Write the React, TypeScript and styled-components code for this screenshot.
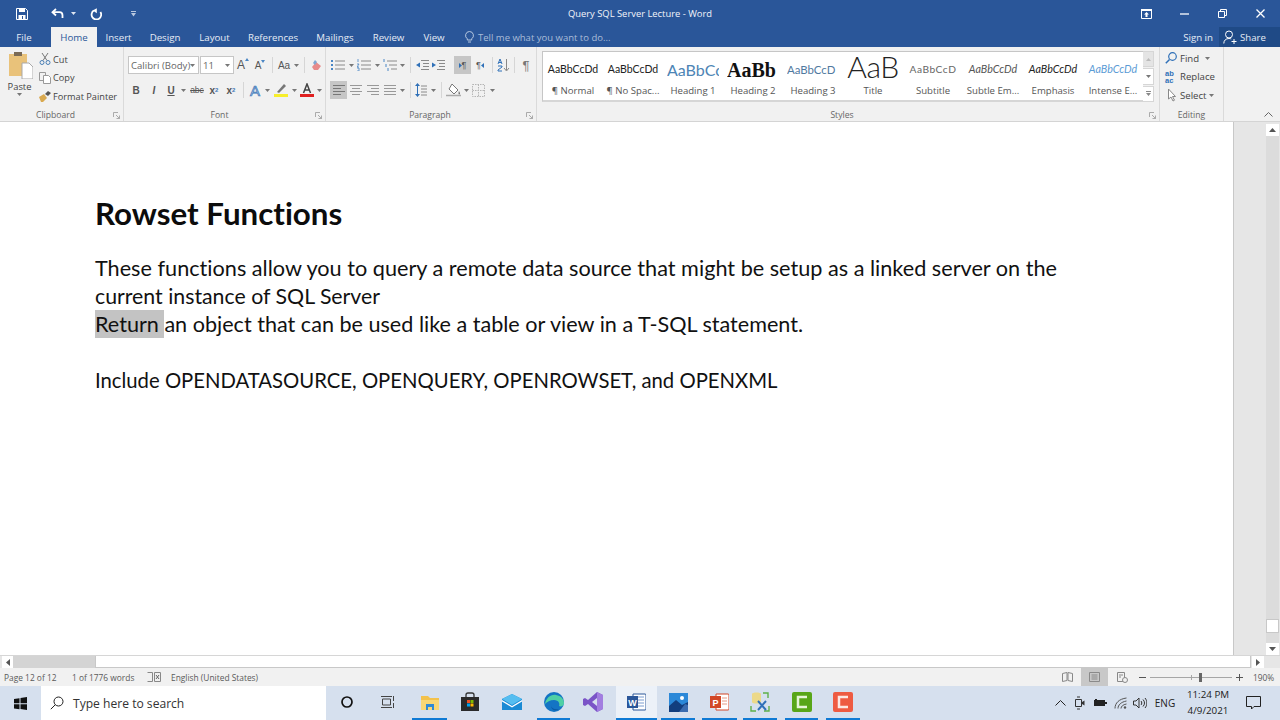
import React from 'react';
import styled, { createGlobalStyle } from 'styled-components';

const GlobalStyle = createGlobalStyle`
  html, body {
    margin: 0;
    padding: 0;
    width: 1280px;
    height: 720px;
    overflow: hidden;
    background: #fff;
    font-family: 'Open Sans', 'Noto Sans', sans-serif;
  }
`;

const Window = styled.div`
  width: 1280px;
  height: 720px;
  display: flex;
  flex-direction: column;
  color: #444;
`;

const TitleBar = styled.div`
  height: 27px;
  background: #2a5699;
  display: grid;
  grid-template-columns: 1fr auto 1fr;
  align-items: center;
  color: #fff;
`;

const TitleText = styled.div`
  font-size: 9.4px;
  color: #f1f4f9;
  white-space: nowrap;
`;

const Row = styled.div<{ $justify?: string }>`
  display: flex;
  align-items: center;
  justify-content: ${p => p.$justify || 'flex-start'};
`;

const WinRow = styled(Row)`
  padding-right: 1px;
`;

const Slot = styled.div<{ $w: number; $h?: number; $active?: boolean }>`
  width: ${p => p.$w}px;
  height: ${p => p.$h || 18}px;
  flex: none;
  display: flex;
  align-items: center;
  justify-content: center;
  background: ${p => (p.$active ? '#c6c6c6' : 'transparent')};
  font-size: 10px;
  color: #555;
  font-family: 'Liberation Sans', sans-serif;
`;

const Divider = styled(Slot)`
  &::after {
    content: '';
    width: 1px;
    height: 16px;
    background: #d6d6d6;
  }
`;

const TabBar = styled.div`
  height: 20px;
  background: #2a5699;
  display: flex;
  align-items: stretch;
`;

const Tab = styled.div<{ $w: number; $active?: boolean; $ml?: number }>`
  width: ${p => p.$w}px;
  margin-left: ${p => p.$ml || 0}px;
  flex: none;
  display: flex;
  align-items: center;
  justify-content: center;
  font-size: 9.7px;
  white-space: nowrap;
  background: ${p => (p.$active ? '#f1f1f1' : 'transparent')};
  color: ${p => (p.$active ? '#2a5699' : '#e6ecf5')};
`;

const TellMe = styled.div`
  display: flex;
  align-items: center;
  gap: 4px;
  margin-left: 11px;
  font-size: 9.5px;
  color: #a9bcd8;
  white-space: nowrap;
`;

const TabRight = styled.div`
  margin-left: auto;
  display: flex;
  align-items: stretch;
`;

const SignIn = styled.div`
  display: flex;
  align-items: center;
  font-size: 9.7px;
  color: #e6ecf5;
  margin-right: 6px;
`;

const Share = styled.div`
  width: 61px;
  background: #1f4a86;
  color: #e6ecf5;
  font-size: 9.6px;
  display: flex;
  align-items: center;
  gap: 3px;
  padding-left: 4px;
  box-sizing: border-box;
`;

const Ribbon = styled.div`
  height: 75px;
  flex: none;
  background: #f1f1f1;
  border-bottom: 1px solid #d4d4d4;
  box-sizing: border-box;
  display: flex;
  position: relative;
`;

const Group = styled.section<{ $w: number; $noBorder?: boolean }>`
  width: ${p => p.$w}px;
  flex: none;
  box-sizing: border-box;
  display: flex;
  flex-direction: column;
  position: relative;
  border-right: ${p => (p.$noBorder ? 'none' : '1px solid #dadada')};
`;

const GroupBody = styled.div<{ $pl?: number; $pt?: number }>`
  flex: 1;
  min-height: 0;
  padding-left: ${p => p.$pl || 0}px;
  padding-top: ${p => p.$pt || 0}px;
`;

const GroupLabel = styled.div<{ $pr?: number }>`
  height: 13px;
  font-size: 8.6px;
  line-height: 15px;
  text-align: center;
  color: #666;
  padding-right: ${p => p.$pr || 0}px;
`;

const Launcher = styled.div`
  position: absolute;
  right: 3px;
  bottom: 2px;
  line-height: 0;
`;

const Collapse = styled.div`
  position: absolute;
  right: 7px;
  bottom: 4px;
  line-height: 0;
`;

const ClipRow = styled.div`
  display: flex;
`;

const PasteCol = styled.div`
  width: 38px;
  padding-left: 1px;
  box-sizing: border-box;
  display: flex;
  flex-direction: column;
  align-items: center;
  padding-top: 4px;
  font-size: 9.4px;
  color: #444;
`;

const PasteIcon = styled.div`
  margin-left: 3px;
`;

const PasteText = styled.div`
  margin-top: 1px;
  line-height: 13px;
`;

const ClipList = styled.div`
  display: flex;
  flex-direction: column;
  padding-top: 3px;
`;

const ClipItem = styled.div`
  height: 18.5px;
  display: flex;
  align-items: center;
  gap: 1px;
  font-size: 9.2px;
  white-space: nowrap;
  color: #444;
`;

const ToolRows = styled.div`
  display: flex;
  flex-direction: column;
  gap: 7px;
  padding-top: 9px;
`;

const FontBox = styled.div<{ $w: number; $ml?: number }>`
  width: ${p => p.$w}px;
  margin-left: ${p => p.$ml || 0}px;
  height: 18px;
  flex: none;
  box-sizing: border-box;
  background: #fff;
  border: 1px solid #c6c6c6;
  display: flex;
  align-items: center;
  justify-content: space-between;
  padding: 0 3px 0 2px;
  font-size: 9.6px;
  color: #666;
  white-space: nowrap;
  overflow: hidden;
`;

const SizeCaret = styled.span`
  display: flex;
  align-items: flex-start;
`;

const Gallery = styled.div`
  margin: 4px 0 0 5px;
  width: 612px;
  height: 51px;
  display: flex;
`;

const GalleryItems = styled.div`
  width: 601px;
  box-sizing: border-box;
  background: #fff;
  border: 1px solid #c6c6c6;
  border-right: none;
  border-bottom: 2px solid #d6d6d6;
  display: flex;
`;

const StyleItem = styled.div`
  width: 60px;
  flex: none;
  display: flex;
  flex-direction: column;
  align-items: center;
  overflow: hidden;
`;

const StylePreview = styled.div<{ $font: string; $size: number; $color: string; $bold?: boolean; $italic?: boolean; $spacing?: number; $light?: boolean; $raise?: number }>`
  height: 29px;
  width: 52px;
  overflow: hidden;
  white-space: nowrap;
  display: flex;
  align-items: center;
  justify-content: ${p => (p.$spacing === undefined ? 'flex-start' : 'center')};
  font-family: ${p => p.$font};
  font-size: ${p => p.$size}px;
  line-height: 1;
  color: ${p => p.$color};
  font-weight: ${p => (p.$bold ? 700 : p.$light ? 300 : 400)};
  font-style: ${p => (p.$italic ? 'italic' : 'normal')};
  letter-spacing: ${p => p.$spacing || 0}px;
  margin-top: 3px;
  padding-bottom: ${p => p.$raise || 0}px;
  box-sizing: border-box;
`;

const StyleName = styled.div`
  font-size: 9.6px;
  color: #555;
  white-space: nowrap;
  line-height: 14px;
`;

const GalleryScroll = styled.div`
  width: 11px;
  display: flex;
  flex-direction: column;
  gap: 1px;
  background: #f1f1f1;
`;

const ScrollCell = styled.div<{ $disabled?: boolean }>`
  flex: 1;
  background: ${p => (p.$disabled ? '#e4e4e4' : '#fff')};
  border: 1px solid #d6d6d6;
  border-left: none;
  display: flex;
  align-items: center;
  justify-content: center;
`;

const EditList = styled.div`
  display: flex;
  flex-direction: column;
  padding: 2px 0 0 5px;
`;

const EditItem = styled.div`
  height: 18.5px;
  display: flex;
  align-items: center;
  gap: 3px;
  font-size: 9.6px;
  color: #444;
  white-space: nowrap;
`;

const ReplaceIcon = styled.div`
  width: 12px;
  display: flex;
  flex-direction: column;
  font-family: 'Liberation Sans', sans-serif;
  font-size: 7.5px;
  line-height: 7px;
  font-weight: 700;
  color: #2f70b8;
`;

const Main = styled.div`
  flex: 1;
  min-height: 0;
  display: flex;
`;

const Page = styled.main`
  width: 1234px;
  flex: none;
  box-sizing: border-box;
  background: #fff;
  padding: 70px 0 0 95px;
  border-right: 1px solid #c8c8c8;
  font-family: Lato, 'Open Sans', sans-serif;
  font-variant-ligatures: none;
  color: #111;
`;

const Heading = styled.h1`
  margin: 0 0 20px;
  height: 42px;
  line-height: 42px;
  font-size: 31.3px;
  font-weight: 700;
  white-space: nowrap;
  color: #0c0c0c;
`;

const Line = styled.p<{ $size?: number }>`
  margin: 0;
  height: 28px;
  line-height: 28px;
  font-size: ${p => p.$size || 21.67}px;
  white-space: nowrap;
`;

const Highlight = styled.span`
  display: inline-block;
  height: 28px;
  background: #c3c3c3;
  white-space: pre;
`;

const Gutter = styled.aside`
  flex: 1;
  background: #e6e6e6;
  display: flex;
  justify-content: flex-end;
  padding-right: 1px;
`;

const VScroll = styled.div`
  width: 13px;
  background: #dcdcdc;
  display: flex;
  flex-direction: column;
  margin-top: 2px;
`;

const ArrowBox = styled.div<{ $w?: number; $h?: number }>`
  width: ${p => p.$w || 13}px;
  height: ${p => p.$h || 12}px;
  flex: none;
  background: #fff;
  display: flex;
  align-items: center;
  justify-content: center;
`;

const VTrack = styled.div`
  flex: 1;
`;

const VThumb = styled.div`
  height: 14px;
  flex: none;
  background: #fff;
  border: 1px solid #c8c8c8;
  box-sizing: border-box;
  margin-bottom: 10px;
`;

const HScroll = styled.div`
  height: 13px;
  flex: none;
  background: #e6e6e6;
  display: flex;
  align-items: stretch;
  padding-left: 2px;
  border-top: 1px solid #d6d6d6;
  box-sizing: border-box;
`;

const HTrack = styled.div`
  width: 82px;
  background: #d4d4d4;
`;

const HThumb = styled.div`
  width: 1156px;
  background: #fff;
  border: 1px solid #c8c8c8;
  border-top: none;
  box-sizing: border-box;
  margin-right: 1px;
`;

const StatusBar = styled.div`
  height: 18px;
  flex: none;
  background: #f1f1f1;
  display: flex;
  align-items: center;
  font-size: 8.4px;
  color: #5a5a5a;
  white-space: nowrap;
`;

const StatusText = styled.span<{ $w?: number; $ml?: number }>`
  margin-left: ${p => p.$ml || 0}px;
  width: ${p => (p.$w ? `${p.$w}px` : 'auto')};
  flex: none;
`;

const StatusRight = styled.div`
  margin-left: auto;
  display: flex;
  align-items: center;
  height: 100%;
`;

const ViewBtn = styled.div<{ $w: number; $active?: boolean }>`
  width: ${p => p.$w}px;
  height: 100%;
  display: flex;
  align-items: center;
  justify-content: center;
  background: ${p => (p.$active ? '#c8c8c8' : 'transparent')};
`;

const ZoomSlider = styled.div`
  width: 82px;
  height: 1px;
  margin: 0 2px;
  background: #a6a6a6;
  position: relative;
`;

const ZoomThumb = styled.div`
  position: absolute;
  left: 49px;
  top: -4px;
  width: 3px;
  height: 9px;
  background: #666;
`;

const ZoomTick = styled.div`
  position: absolute;
  left: 41px;
  top: -2px;
  width: 1px;
  height: 5px;
  background: #a6a6a6;
`;

const Taskbar = styled.div`
  height: 34px;
  flex: none;
  background: #d6e0ee;
  display: flex;
  align-items: stretch;
`;

const StartBtn = styled.div`
  width: 41px;
  display: flex;
  align-items: center;
  justify-content: center;
`;

const SearchBox = styled.div`
  width: 285px;
  background: #fff;
  display: flex;
  align-items: center;
  gap: 9px;
  padding-left: 9px;
  box-sizing: border-box;
  font-size: 12.1px;
  color: #333;
`;

const TaskIcon = styled.div<{ $w: number; $ml?: number; $active?: boolean; $open?: boolean }>`
  width: ${p => p.$w}px;
  margin-left: ${p => p.$ml || 0}px;
  flex: none;
  display: flex;
  align-items: center;
  justify-content: center;
  box-sizing: border-box;
  background: ${p => (p.$active ? '#ecf1f8' : 'transparent')};
  border-bottom: 2px solid ${p => (p.$open ? '#0f7ad4' : 'transparent')};
`;

const Tray = styled.div`
  margin-left: auto;
  display: flex;
  align-items: center;
`;

const TrayText = styled.div`
  width: 30px;
  text-align: center;
  font-size: 10px;
  color: #222;
`;

const Clock = styled.div`
  width: 56px;
  text-align: center;
  font-size: 9.8px;
  line-height: 16px;
  color: #222;
`;

const Svg: React.FC<{ w: number; h: number; children: React.ReactNode }> = ({ w, h, children }) => (
  <svg width={w} height={h} viewBox={`0 0 ${w} ${h}`} fill="none" style={{ display: 'block', flex: 'none' }}>
    {children}
  </svg>
);

const Chev: React.FC<{ c?: string }> = ({ c = '#777' }) => (
  <Svg w={5} h={3}><path d="M0 0h5L2.5 3z" fill={c} /></Svg>
);

const Lines: React.FC<{ kind: 'bullet' | 'number' | 'multi' }> = ({ kind }) => (
  <Svg w={14} h={12}>
    {kind === 'bullet' && <path d="M0 1h2v2H0zM0 5h2v2H0zM0 9h2v2H0z" fill="#4a86c4" />}
    {kind === 'number' && <path d="M1 0v3M0 5h2L0 8h2M0 9h2v3H0" stroke="#4a86c4" strokeWidth=".8" />}
    {kind === 'multi' && <path d="M1 0v3M3 5v3M5 9v3" stroke="#4a86c4" />}
    <path d={kind === 'multi' ? 'M4 2h10M6 6h8M8 10h6' : 'M4 2h10M4 6h10M4 10h10'} stroke="#8a8a8a" />
  </Svg>
);

const Align: React.FC<{ kind: 'left' | 'center' | 'right' | 'justify' }> = ({ kind }) => {
  const paths = {
    left: 'M1 1.5h12M1 4.5h8M1 7.5h12M1 10.5h8',
    center: 'M1 1.5h12M3 4.5h8M1 7.5h12M3 10.5h8',
    right: 'M1 1.5h12M5 4.5h8M1 7.5h12M5 10.5h8',
    justify: 'M1 1.5h12M1 4.5h12M1 7.5h12M1 10.5h12',
  };
  return <Svg w={14} h={12}><path d={paths[kind]} stroke={kind === 'left' ? '#777' : '#999'} /></Svg>;
};

const Launch = () => (
  <Svg w={7} h={7}><path d="M.5 5V.5H5M3 3l3.5 3.5M6.5 3.5v3h-3" stroke="#999" strokeWidth=".8" /></Svg>
);

const Caret: React.FC<{ down?: boolean }> = ({ down }) => (
  <Svg w={4} h={3}><path d={down ? 'M0 0h4L2 3z' : 'M2 0l2 3H0z'} fill="#4a86c4" /></Svg>
);

const styleItems = [
  { sample: 'AaBbCcDd', name: '¶ Normal', font: 'Lato, sans-serif', size: 10.5, color: '#222', spacing: 0 },
  { sample: 'AaBbCcDd', name: '¶ No Spac...', font: 'Lato, sans-serif', size: 10.5, color: '#222', spacing: 0 },
  { sample: 'AaBbCc', name: 'Heading 1', font: 'Lato, sans-serif', size: 16, color: '#4d85b5' },
  { sample: 'AaBb', name: 'Heading 2', font: "'Liberation Serif', serif", size: 20, color: '#111', bold: true },
  { sample: 'AaBbCcD', name: 'Heading 3', font: 'Lato, sans-serif', size: 11.4, color: '#50799f' },
  { sample: 'AaB', name: 'Title', font: 'Lato, sans-serif', size: 30, color: '#222', spacing: -0.4, light: true, raise: 7 },
  { sample: 'AaBbCcD', name: 'Subtitle', font: 'Lato, sans-serif', size: 10.2, color: '#666', spacing: 0.5 },
  { sample: 'AaBbCcDd', name: 'Subtle Em...', font: 'Lato, sans-serif', size: 10.7, color: '#555', italic: true, spacing: 0 },
  { sample: 'AaBbCcDd', name: 'Emphasis', font: 'Lato, sans-serif', size: 10.7, color: '#222', italic: true, spacing: 0 },
  { sample: 'AaBbCcDd', name: 'Intense E...', font: 'Lato, sans-serif', size: 10.7, color: '#5b9bd5', italic: true, spacing: 0 },
];

const App: React.FC = () => {
  return (
    <>
      <GlobalStyle />
      <Window>
        <TitleBar>
          <Row>
            <Slot $w={44}>
              <Svg w={12} h={12}>
                <path d="M.5.5h9l2 2v9H.5z" stroke="#fff" />
                <path d="M3 1v3h6V1z" fill="#fff" />
                <path d="M2.5 7h7v4.5h-7z" fill="#fff" />
                <path d="M6.5 8v3" stroke="#2a5699" />
              </Svg>
            </Slot>
            <Slot $w={26}>
              <Svg w={13} h={11}>
                <path d="M5 1L1.5 4.2 5 7.5" stroke="#fff" strokeWidth="1.8" />
                <path d="M2 4.2h6.5a3 3 0 013 3V10" stroke="#fff" strokeWidth="1.8" />
              </Svg>
            </Slot>
            <Slot $w={6}><Chev c="#dfe7f2" /></Slot>
            <Slot $w={9} />
            <Slot $w={22}>
              <Svg w={12} h={12}>
                <path d="M3.8 2.6a4.8 4.8 0 106.6 1.4" stroke="#fff" strokeWidth="1.8" />
                <path d="M6.8.2v5L2.8 2.6z" fill="#fff" />
              </Svg>
            </Slot>
            <Slot $w={22} />
            <Slot $w={8}>
              <Svg w={5} h={6}><path d="M0 0h5v1H0zM0 2h5L2.5 5.5z" fill="#b9c8df" /></Svg>
            </Slot>
          </Row>
          <TitleText>Query SQL Server Lecture - Word</TitleText>
          <WinRow $justify="flex-end">
            <Slot $w={38}>
              <Svg w={11} h={10}>
                <path d="M.5.5h10v9H.5z" stroke="#fff" />
                <path d="M0 0h11v2H0zM5.5 3L8 5.5H6.5V8h-2V5.5H3z" fill="#fff" />
              </Svg>
            </Slot>
            <Slot $w={38}><Svg w={9} h={2}><path d="M0 1h9" stroke="#fff" strokeWidth="1.3" /></Svg></Slot>
            <Slot $w={38}>
              <Svg w={9} h={9}><path d="M.5 2.5h6v6h-6zM2.5 2.5v-2h6v6h-2" stroke="#fff" /></Svg>
            </Slot>
            <Slot $w={38}><Svg w={9} h={9}><path d="M.5.5l8 8M8.5.5l-8 8" stroke="#fff" strokeWidth="1.3" /></Svg></Slot>
          </WinRow>
        </TitleBar>

        <TabBar>
          <Tab $w={48}>File</Tab>
          <Tab $w={46} $ml={3} $active>Home</Tab>
          <Tab $w={43}>Insert</Tab>
          <Tab $w={50}>Design</Tab>
          <Tab $w={49}>Layout</Tab>
          <Tab $w={68}>References</Tab>
          <Tab $w={56}>Mailings</Tab>
          <Tab $w={51}>Review</Tab>
          <Tab $w={40}>View</Tab>
          <TellMe>
            <Svg w={9} h={12}>
              <path d="M4.5.5a4 4 0 012.2 7.3V9H2.3V7.8A4 4 0 014.5.5zM3 11h3" stroke="#b7c8e0" />
            </Svg>
            Tell me what you want to do...
          </TellMe>
          <TabRight>
            <SignIn>Sign in</SignIn>
            <Share>
              <Svg w={14} h={14}>
                <circle cx="6" cy="4.5" r="3.5" stroke="#fff" />
                <path d="M.8 13.5c0-3 2-5 5.2-5 1 0 1.6.2 2.2.5M8.5 11.5h5M11 9v5" stroke="#fff" />
              </Svg>
              Share
            </Share>
          </TabRight>
        </TabBar>

        <Ribbon>
          <Group $w={124}>
            <GroupBody>
              <ClipRow>
                <PasteCol>
                  <PasteIcon>
                    <Svg w={24} h={28}>
                      <path d="M0 3h18v22H0z" fill="#e9c27a" />
                      <path d="M5 1h8v4H5z" fill="#7a6a55" />
                      <path d="M13 12h7l4 4v12H13z" fill="#fff" stroke="#a9a9a9" />
                    </Svg>
                  </PasteIcon>
                  <PasteText>Paste</PasteText>
                  <Chev />
                </PasteCol>
                <ClipList>
                  <ClipItem>
                    <Slot $w={14}>
                      <Svg w={12} h={12}>
                        <path d="M3 0l5 7.5M9 0L4 7.5" stroke="#777" />
                        <circle cx="3" cy="9.5" r="2" stroke="#4a7fb5" />
                        <circle cx="9" cy="9.5" r="2" stroke="#4a7fb5" />
                      </Svg>
                    </Slot>
                    Cut
                  </ClipItem>
                  <ClipItem>
                    <Slot $w={14}>
                      <Svg w={12} h={12}>
                        <path d="M.5.5h6v8h-6z" fill="#f1f1f1" stroke="#999" />
                        <path d="M4.5 3.5h5l2 2v6h-7z" fill="#fff" stroke="#999" />
                      </Svg>
                    </Slot>
                    Copy
                  </ClipItem>
                  <ClipItem>
                    <Slot $w={14}>
                      <Svg w={12} h={11}>
                        <path d="M0 6l5-3 3 4-4 4H2z" fill="#d9a94f" />
                        <path d="M6 3l3-3 3 2-3 3z" fill="#555" />
                      </Svg>
                    </Slot>
                    Format Painter
                  </ClipItem>
                </ClipList>
              </ClipRow>
            </GroupBody>
            <GroupLabel $pr={12}>Clipboard</GroupLabel>
            <Launcher><Launch /></Launcher>
          </Group>

          <Group $w={202}>
            <GroupBody $pl={4}>
              <ToolRows>
                <Row>
                  <FontBox $w={71}>Calibri (Body)<Chev /></FontBox>
                  <FontBox $w={34} $ml={1}>11<Chev /></FontBox>
                  <Slot $w={18} style={{ fontSize: 12 }}><SizeCaret>A<Caret /></SizeCaret></Slot>
                  <Slot $w={16} style={{ fontSize: 10 }}><SizeCaret>A<Caret down /></SizeCaret></Slot>
                  <Divider $w={8} />
                  <Slot $w={16}>Aa</Slot>
                  <Slot $w={8}><Chev /></Slot>
                  <Divider $w={8} />
                  <Slot $w={16}>
                    <Svg w={11} h={12}>
                      <path d="M1 8l4-5 5 4-3 4H3z" fill="#e78b8b" />
                      <path d="M4 1l2 2-2 3-2-2z" fill="#7fa8d4" />
                    </Svg>
                  </Slot>
                </Row>
                <Row>
                  <Slot $w={16} style={{ fontWeight: 700 }}>B</Slot>
                  <Slot $w={20} style={{ fontWeight: 700, fontStyle: 'italic' }}>I</Slot>
                  <Slot $w={14} style={{ fontWeight: 700, textDecoration: 'underline' }}>U</Slot>
                  <Slot $w={10}><Chev /></Slot>
                  <Slot $w={18} style={{ fontSize: 8.5, textDecoration: 'line-through' }}>abc</Slot>
                  <Slot $w={16} style={{ fontWeight: 700 }}>x<sub style={{ fontSize: 6, color: '#3f78b8' }}>2</sub></Slot>
                  <Slot $w={18} style={{ fontWeight: 700 }}>x<sup style={{ fontSize: 6, color: '#3f78b8' }}>2</sup></Slot>
                  <Divider $w={6} />
                  <Slot $w={18} style={{ fontSize: 15, color: '#bcd4ee', WebkitTextStroke: '0.7px #3f78b8' }}>A</Slot>
                  <Slot $w={7}><Chev /></Slot>
                  <Slot $w={20}>
                    <Svg w={14} h={14}>
                      <path d="M3 9l7-8 2 2-7 7z" fill="#777" />
                      <path d="M0 11h14v3H0z" fill="#f7ee2b" />
                    </Svg>
                  </Slot>
                  <Slot $w={6}><Chev /></Slot>
                  <Slot $w={20}>
                    <Svg w={14} h={14}>
                      <path d="M3.5 10L7 1l3.5 9M5 7h4" stroke="#444" strokeWidth="1.5" />
                      <path d="M0 11h14v3H0z" fill="#e02020" />
                    </Svg>
                  </Slot>
                  <Slot $w={5}><Chev /></Slot>
                </Row>
              </ToolRows>
            </GroupBody>
            <GroupLabel $pr={10}>Font</GroupLabel>
            <Launcher><Launch /></Launcher>
          </Group>

          <Group $w={211}>
            <GroupBody $pl={4}>
              <ToolRows>
                <Row>
                  <Slot $w={16}><Lines kind="bullet" /></Slot>
                  <Slot $w={10}><Chev /></Slot>
                  <Slot $w={16}><Lines kind="number" /></Slot>
                  <Slot $w={10}><Chev /></Slot>
                  <Slot $w={16}><Lines kind="multi" /></Slot>
                  <Slot $w={8}><Chev /></Slot>
                  <Divider $w={8} />
                  <Slot $w={16}>
                    <Svg w={14} h={12}>
                      <path d="M6 1.5h8M8 4.5h6M8 7.5h6M6 10.5h8" stroke="#8a8a8a" />
                      <path d="M5 3.5v5L1 6z" fill="#2f70b8" />
                    </Svg>
                  </Slot>
                  <Slot $w={16}>
                    <Svg w={14} h={12}>
                      <path d="M6 1.5h8M8 4.5h6M8 7.5h6M6 10.5h8" stroke="#8a8a8a" />
                      <path d="M1 3.5v5L5 6z" fill="#2f70b8" />
                    </Svg>
                  </Slot>
                  <Slot $w={8} />
                  <Slot $w={17} $active style={{ fontSize: 9 }}>
                    <Svg w={3} h={5}><path d="M0 0l3 2.5L0 5z" fill="#2f70b8" /></Svg>¶
                  </Slot>
                  <Slot $w={18} style={{ fontSize: 9 }}>
                    ¶<Svg w={3} h={5}><path d="M3 0L0 2.5 3 5z" fill="#2f70b8" /></Svg>
                  </Slot>
                  <Divider $w={6} />
                  <Slot $w={16}>
                    <Svg w={13} h={14}>
                      <path d="M1 6l2-5 2 5M1.8 4.5h2.4M1 8h4v1L1 12v1h4" stroke="#2f70b8" />
                      <path d="M9.5 1v11M7 10l2.5 3 2.5-3" stroke="#888" />
                    </Svg>
                  </Slot>
                  <Divider $w={6} />
                  <Slot $w={18} style={{ fontSize: 13, color: '#777' }}>¶</Slot>
                </Row>
                <Row>
                  <Slot $w={17} $active><Align kind="left" /></Slot>
                  <Slot $w={18}><Align kind="center" /></Slot>
                  <Slot $w={16}><Align kind="right" /></Slot>
                  <Slot $w={17}><Align kind="justify" /></Slot>
                  <Slot $w={8}><Chev /></Slot>
                  <Divider $w={8} />
                  <Slot $w={14}>
                    <Svg w={12} h={14}>
                      <path d="M2.5 1v12" stroke="#2f70b8" />
                      <path d="M0 3l2.5-3L5 3zM0 11l2.5 3L5 11z" fill="#2f70b8" />
                      <path d="M6 3h6M6 6h6M6 9h6M6 12h6" stroke="#8a8a8a" />
                    </Svg>
                  </Slot>
                  <Slot $w={10}><Chev /></Slot>
                  <Divider $w={6} />
                  <Slot $w={18}>
                    <Svg w={15} h={14}>
                      <path d="M6 1l6 6-4 4-5-5z" fill="#fff" stroke="#777" />
                      <path d="M13 8c1 2 1.5 3 .5 3.5S12 10 13 8z" fill="#777" />
                      <path d="M0 12.5h15" stroke="#aaa" strokeWidth="1.5" />
                    </Svg>
                  </Slot>
                  <Slot $w={8}><Chev /></Slot>
                  <Slot $w={16}>
                    <Svg w={13} h={13}>
                      <path d="M.5.5h12v12H.5zM6.5.5v12M.5 6.5h12" stroke="#b5b5b5" strokeDasharray="1.5 1" />
                    </Svg>
                  </Slot>
                  <Slot $w={12}><Chev /></Slot>
                </Row>
              </ToolRows>
            </GroupBody>
            <GroupLabel $pr={2}>Paragraph</GroupLabel>
            <Launcher><Launch /></Launcher>
          </Group>

          <Group $w={623}>
            <GroupBody>
              <Gallery>
                <GalleryItems>
                  {styleItems.map(item => (
                    <StyleItem key={item.name}>
                      <StylePreview
                        $font={item.font}
                        $size={item.size}
                        $color={item.color}
                        $bold={item.bold}
                        $italic={item.italic}
                        $spacing={item.spacing}
                        $light={item.light}
                        $raise={item.raise}
                      >
                        {item.sample}
                      </StylePreview>
                      <StyleName>{item.name}</StyleName>
                    </StyleItem>
                  ))}
                </GalleryItems>
                <GalleryScroll>
                  <ScrollCell $disabled><Svg w={5} h={3}><path d="M2.5 0L5 3H0z" fill="#bbb" /></Svg></ScrollCell>
                  <ScrollCell><Chev /></ScrollCell>
                  <ScrollCell><Svg w={5} h={5}><path d="M0 0h5v1H0zM0 2h5L2.5 5z" fill="#888" /></Svg></ScrollCell>
                </GalleryScroll>
              </Gallery>
            </GroupBody>
            <GroupLabel $pr={12}>Styles</GroupLabel>
            <Launcher><Launch /></Launcher>
          </Group>

          <Group $w={64}>
            <GroupBody>
              <EditList>
                <EditItem>
                  <Svg w={12} h={12}>
                    <circle cx="7.5" cy="4.5" r="3.8" stroke="#2f70b8" strokeWidth="1.2" />
                    <path d="M4.5 7.5L.8 11.2" stroke="#2f70b8" strokeWidth="1.5" />
                  </Svg>
                  Find
                  <Slot $w={10}><Chev /></Slot>
                </EditItem>
                <EditItem>
                  <ReplaceIcon>
                    <span>ab</span>
                    <span>ac</span>
                  </ReplaceIcon>
                  Replace
                </EditItem>
                <EditItem>
                  <Svg w={12} h={14}>
                    <path d="M3.5 1v10l2.5-2 2 4 1.5-.8-2-3.7h3z" fill="#fff" stroke="#888" />
                  </Svg>
                  Select
                  <Chev />
                </EditItem>
              </EditList>
            </GroupBody>
            <GroupLabel>Editing</GroupLabel>
          </Group>
          <Collapse>
            <Svg w={9} h={5}><path d="M.5 4.5l4-4 4 4" stroke="#666" /></Svg>
          </Collapse>
        </Ribbon>

        <Main>
          <Page>
            <Heading>Rowset Functions</Heading>
            <Line>These functions allow you to query a remote data source that might be setup as a linked server on the</Line>
            <Line $size={21.3}>current instance of SQL Server</Line>
            <Line $size={21.6}><Highlight>Return </Highlight>an object that can be used like a table or view in a T-SQL statement.</Line>
            <Line />
            <Line $size={20.3}>Include OPENDATASOURCE, OPENQUERY, OPENROWSET, and OPENXML</Line>
          </Page>
          <Gutter>
            <VScroll>
              <ArrowBox><Svg w={7} h={4}><path d="M3.5 0L7 4H0z" fill="#555" /></Svg></ArrowBox>
              <VTrack />
              <VThumb />
              <ArrowBox><Svg w={7} h={4}><path d="M0 0h7L3.5 4z" fill="#555" /></Svg></ArrowBox>
            </VScroll>
          </Gutter>
        </Main>

        <HScroll>
          <ArrowBox $w={11}><Svg w={4} h={7}><path d="M4 0v7L0 3.5z" fill="#555" /></Svg></ArrowBox>
          <HTrack />
          <HThumb />
          <ArrowBox $w={12}><Svg w={4} h={7}><path d="M0 0v7l4-3.5z" fill="#555" /></Svg></ArrowBox>
        </HScroll>

        <StatusBar>
          <StatusText $ml={4} $w={68}>Page 12 of 12</StatusText>
          <StatusText $w={75}>1 of 1776 words</StatusText>
          <Slot $w={14}>
            <Svg w={14} h={10}>
              <path d="M.5.5h5v9h-5M7.5.5h6v9h-6z" stroke="#888" />
              <path d="M9 3l3 4M12 3L9 7" stroke="#666" />
            </Svg>
          </Slot>
          <StatusText $ml={10}>English (United States)</StatusText>
          <StatusRight>
            <ViewBtn $w={28}>
              <Svg w={11} h={10}><path d="M.5 1.5l4.5-1v8l-4.5 1zM10.5 1.5L6 .5v8l4.5 1z" stroke="#888" /></Svg>
            </ViewBtn>
            <ViewBtn $w={27} $active>
              <Svg w={11} h={10}><path d="M.5.5h10v9H.5zM2.5 3h6M2.5 5h6M2.5 7h6" stroke="#8a8a8a" /></Svg>
            </ViewBtn>
            <ViewBtn $w={28}>
              <Svg w={11} h={11}><path d="M.5.5h7v9h-7zM2 3h4M2 5h2" stroke="#888" /><circle cx="8" cy="8" r="2.5" fill="#f1f1f1" stroke="#888" /></Svg>
            </ViewBtn>
            <ViewBtn $w={12}><Svg w={7} h={1}><path d="M0 .5h7" stroke="#555" /></Svg></ViewBtn>
            <ZoomSlider><ZoomTick /><ZoomThumb /></ZoomSlider>
            <ViewBtn $w={11}><Svg w={7} h={7}><path d="M0 3.5h7M3.5 0v7" stroke="#555" /></Svg></ViewBtn>
            <StatusText $ml={8} $w={27}>190%</StatusText>
          </StatusRight>
        </StatusBar>

        <Taskbar>
          <StartBtn>
            <Svg w={13} h={13}>
              <path d="M0 2l5.5-.8v5H0zM6.5 1L13 0v6.2H6.5zM0 7.2h5.5v5L0 11.4zM6.5 7.2H13V13l-6.5-1z" fill="#111" />
            </Svg>
          </StartBtn>
          <SearchBox>
            <Svg w={14} h={14}>
              <circle cx="8.5" cy="5.5" r="4.5" stroke="#222" />
              <path d="M5.3 8.7L.8 13.2" stroke="#222" />
            </Svg>
            Type here to search
          </SearchBox>
          <TaskIcon $w={42}>
            <Svg w={12} h={12}><circle cx="6" cy="6" r="5" stroke="#111" strokeWidth="1.7" /></Svg>
          </TaskIcon>
          <TaskIcon $w={38}>
            <Svg w={14} h={14}>
              <path d="M2.5 4h8v6h-8zM1 1.5h11M1 12.5h11M13.5 1v5M13.5 8v5" stroke="#444" />
            </Svg>
          </TaskIcon>
          <TaskIcon $w={35} $ml={6} $open>
            <Svg w={18} h={15}>
              <path d="M0 1h7l2 2h9v12H0z" fill="#f3c24c" />
              <path d="M0 5h18v10H0z" fill="#f8d775" />
              <path d="M5 9h8v6h-2v-3H7v3H5z" fill="#2f8ad6" />
            </Svg>
          </TaskIcon>
          <TaskIcon $w={42} $ml={2}>
            <Svg w={20} h={20}>
              <path d="M6 5V3a2 2 0 012-2h4a2 2 0 012 2v2" stroke="#333" strokeWidth="1.3" />
              <path d="M1 5h18v14H1z" fill="#2a2a2a" />
              <path d="M7 8h3v3H7z" fill="#f25022" />
              <path d="M10.5 8h3v3h-3z" fill="#7fba00" />
              <path d="M7 11.5h3v3H7z" fill="#00a4ef" />
              <path d="M10.5 11.5h3v3h-3z" fill="#ffb900" />
            </Svg>
          </TaskIcon>
          <TaskIcon $w={42}>
            <Svg w={20} h={16}>
              <path d="M0 5L10 0l10 5v11H0z" fill="#1a8ad4" />
              <path d="M0 5l10 6 10-6L10 0z" fill="#55bdf0" />
              <path d="M0 6l10 6 10-6v1.5l-10 6-10-6z" fill="#fff" />
            </Svg>
          </TaskIcon>
          <TaskIcon $w={33} $ml={4} $open>
            <Svg w={20} h={20}>
              <circle cx="10" cy="10" r="10" fill="#1474c4" />
              <path d="M1 12C2 6 7 2 12 3c5 .8 8 4 8 8 0 3-3 4-5 3 1-2 0-6-5-6-4 0-7 2-9 4z" fill="#4fd0a5" />
              <path d="M7 13c0-3 2-5 5-5-3 0-5 2-5 5 0 3 3 5 8 4-4 3-8 1-8-4z" fill="#0c59a4" />
            </Svg>
          </TaskIcon>
          <TaskIcon $w={46}>
            <Svg w={20} h={20}>
              <path d="M14 0l6 3v14l-6 3-9-8-3 2-2-1V7l2-1 3 2zM14 6l-5 4 5 4z" fill="#7a54c7" />
              <path d="M14 0l6 3v14l-6 3z" fill="#a27ee0" />
            </Svg>
          </TaskIcon>
          <TaskIcon $w={41} $active $open>
            <Svg w={19} h={18}>
              <path d="M6 1h12a1 1 0 011 1v14a1 1 0 01-1 1H6z" fill="#fff" stroke="#2a5699" />
              <path d="M11 4h6M11 7h6M11 10h6M11 13h6" stroke="#7a9ccf" />
              <path d="M0 3h11v12H0z" fill="#2a5699" />
              <text x="5.5" y="12.5" textAnchor="middle" fontSize="9" fontWeight="700" fill="#fff" fontFamily="Liberation Sans">W</text>
            </Svg>
          </TaskIcon>
          <TaskIcon $w={34} $ml={4} $open>
            <Svg w={19} h={19}>
              <path d="M0 0h19v19H0z" fill="#2b88d8" />
              <path d="M0 19V13l7-6 6 5 6-3v10z" fill="#123e7e" />
              <path d="M10 19l6-8 3 1v7z" fill="#3b6cb0" />
              <circle cx="13" cy="5" r="2" fill="#fff" />
            </Svg>
          </TaskIcon>
          <TaskIcon $w={35} $ml={7} $open>
            <Svg w={19} h={18}>
              <path d="M6 1h12a1 1 0 011 1v14a1 1 0 01-1 1H6z" fill="#fff" stroke="#d24726" />
              <path d="M12 5h5M12 8h5M12 11h5" stroke="#e59a85" />
              <path d="M0 3h11v12H0z" fill="#d24726" />
              <text x="5.5" y="12.5" textAnchor="middle" fontSize="9" fontWeight="700" fill="#fff" fontFamily="Liberation Sans">P</text>
            </Svg>
          </TaskIcon>
          <TaskIcon $w={34} $ml={6} $open>
            <Svg w={20} h={20}>
              <path d="M2 2c0-2 9-2 9 0v8c0 2-9 2-9 0z" fill="#ecd98a" />
              <path d="M13 1h5v5M1 14v5h5M19 14v5h-5" stroke="#5fb04a" strokeWidth="1.4" />
              <path d="M8 9l8 9M16 9l-8 9" stroke="#2f70b8" strokeWidth="2" />
            </Svg>
          </TaskIcon>
          <TaskIcon $w={33} $ml={8} $open>
            <Svg w={20} h={20}>
              <path d="M0 2a2 2 0 012-2h16a2 2 0 012 2v16a2 2 0 01-2 2H2a2 2 0 01-2-2z" fill="#58a618" />
              <path d="M15 5H6v10h9" stroke="#e6f5d6" strokeWidth="2.5" />
            </Svg>
          </TaskIcon>
          <TaskIcon $w={34} $ml={8} $open>
            <Svg w={20} h={20}>
              <path d="M0 2a2 2 0 012-2h16a2 2 0 012 2v16a2 2 0 01-2 2H2a2 2 0 01-2-2z" fill="#ee5b42" />
              <path d="M15 5H6v10h9" stroke="#fde7e2" strokeWidth="2.5" />
            </Svg>
          </TaskIcon>
          <Tray>
            <Slot $w={20}><Svg w={11} h={6}><path d="M.5 5.5l5-5 5 5" stroke="#222" /></Svg></Slot>
            <Slot $w={20}>
              <Svg w={10} h={14}>
                <path d="M.5 3.5h6v7h-6zM2 1h3M2 13h3" stroke="#333" />
                <path d="M7 6l2.5-1.5v5L7 8z" fill="#333" />
              </Svg>
            </Slot>
            <Slot $w={20}>
              <Svg w={14} h={8}><path d="M1 1h11v6H1z" fill="#222" /><path d="M12 3h2v2h-2zM2 0h2v1H2z" fill="#222" /></Svg>
            </Slot>
            <Slot $w={20}>
              <Svg w={13} h={12}>
                <path d="M1 11.5C1 6 5 2 12.5 1M4 11.5C4 8 7 5 12.5 4M7 11.5c0-2 2-4 5.5-4.5" stroke="#555" />
                <circle cx="11" cy="10.5" r="1.2" fill="#555" />
              </Svg>
            </Slot>
            <Slot $w={20}>
              <Svg w={14} h={12}>
                <path d="M.5 4H3l3-3v10L3 8H.5z" stroke="#333" />
                <path d="M8 4c1 1 1 3 0 4M10 2.5c2 2 2 5 0 7M12 1c2.5 3 2.5 7 0 10" stroke="#333" />
              </Svg>
            </Slot>
            <TrayText>ENG</TrayText>
            <Clock>11:24 PM<br />4/9/2021</Clock>
            <Slot $w={34} $h={16}>
              <Svg w={15} h={14}><path d="M.5.5h14v10H8L5.5 13v-2.5h-5z" stroke="#222" /></Svg>
            </Slot>
            <Slot $w={10} />
          </Tray>
        </Taskbar>
      </Window>
    </>
  );
};

export default App;
